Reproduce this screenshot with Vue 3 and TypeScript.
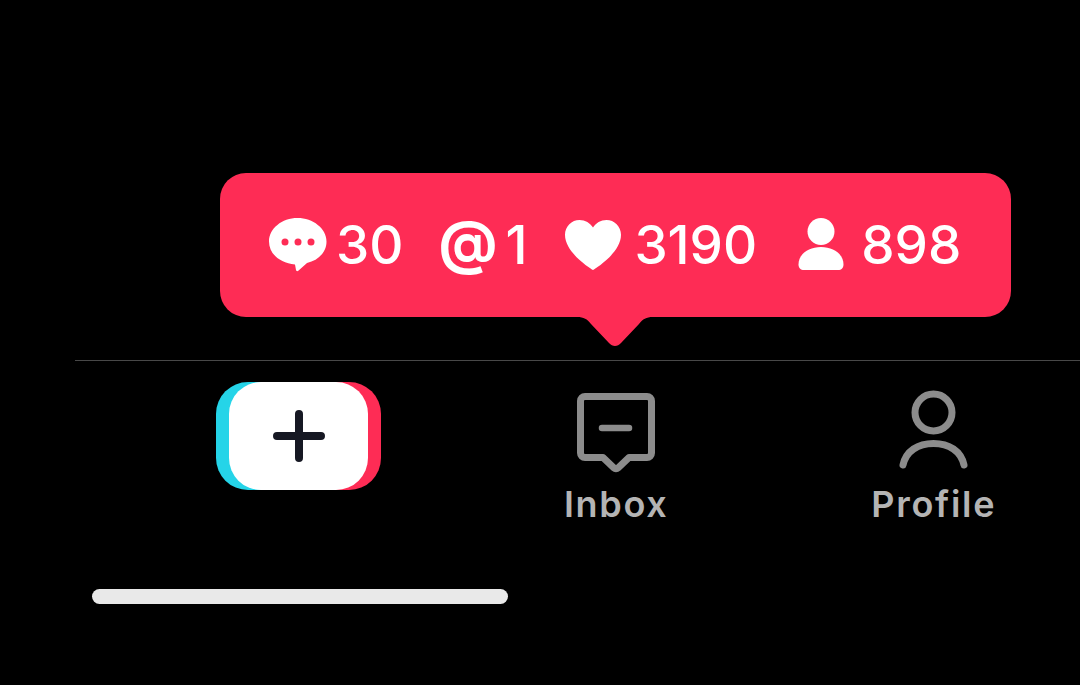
<template>
  <div class="screen">
    <div class="tooltip">
      <div class="stat stat-comment">
        <svg class="icon" width="58" height="54" viewBox="0 0 58 54">
          <path d="M28.500 0C13 0 0 10.500 0 23.500c0 12.500 11 21.500 26 23l1 5.500c.2 1.200 1.400 1.500 2.300.7L38 45C49 42.500 57.500 34.500 57.500 23.500 57.500 10.500 44 0 28.500 0z" fill="#fff" />
          <circle cx="16" cy="24" r="3.500" fill="#fe2c55" />
          <circle cx="29" cy="24" r="3.500" fill="#fe2c55" />
          <circle cx="42" cy="24" r="3.500" fill="#fe2c55" />
        </svg>
        <span>30</span>
      </div>
      <div class="stat stat-mention">
        <span class="at">@</span>
        <span>1</span>
      </div>
      <div class="stat stat-like">
        <svg class="icon" width="56" height="52" viewBox="0 0 58 52">
          <path d="M29 52C26 50 0 34 0 15.500 0 6.500 7 0 15 0c6 0 11 3 14 8 3-5 8-8 14-8 8 0 15 6.500 15 15.500C58 34 32 50 29 52z" fill="#fff" />
        </svg>
        <span>3190</span>
      </div>
      <div class="stat stat-follow">
        <svg class="icon" width="46" height="54" viewBox="0 0 46 54">
          <circle cx="23" cy="13.500" r="13.500" fill="#fff" />
          <path d="M23 29C10 29 .5 36.500 .5 46.500.5 50 2.500 52 6 52h34c3.500 0 5.500-2 5.500-5.500C45.500 36.500 36 29 23 29z" fill="#fff" />
        </svg>
        <span>898</span>
      </div>
      <svg class="tail" width="76" height="30" viewBox="0 0 76 30">
        <path d="M0 0h76c-7 0-10 2-14 7L44 26c-3.500 4-8.500 4-12 0L14 7C10 2 7 0 0 0z" fill="#fe2c55" />
      </svg>
    </div>

    <div class="tabbar">
      <div class="tab">
        <div class="create">
          <span class="create-cyan"></span>
          <span class="create-pink"></span>
          <span class="create-white">
            <svg width="52" height="52" viewBox="0 0 52 52">
              <path d="M26 4v44M4 26h44" stroke="#161823" stroke-width="8" stroke-linecap="round" />
            </svg>
          </span>
        </div>
      </div>
      <div class="tab">
        <svg class="tab-icon" width="78" height="80" viewBox="0 0 78 80">
          <path d="M8 3.500h62a4.500 4.500 0 0 1 4.500 4.500v52a4.500 4.500 0 0 1-4.500 4.500H52L41 75a3 3 0 0 1-4 0L26 64.500H8A4.500 4.500 0 0 1 3.500 60V8A4.500 4.500 0 0 1 8 3.500z" fill="none" stroke="#8c8c8c" stroke-width="7" stroke-linejoin="round" />
          <path d="M25 35h27" stroke="#8c8c8c" stroke-width="6.500" stroke-linecap="round" />
        </svg>
        <span class="tab-label">Inbox</span>
      </div>
      <div class="tab">
        <svg class="tab-icon" width="78" height="80" viewBox="0 0 78 80">
          <circle cx="38.500" cy="19.500" r="18.500" fill="none" stroke="#8c8c8c" stroke-width="7" />
          <path d="M8 72C11 58 23 50.500 38.500 50.500S66 58 69 72" fill="none" stroke="#8c8c8c" stroke-width="7" stroke-linecap="round" />
        </svg>
        <span class="tab-label">Profile</span>
      </div>
    </div>

    <div class="home-bar"></div>
  </div>
</template>

<script setup lang="ts">
</script>

<style>
html,
body {
  background: #000;
  overflow: hidden;
}
</style>

<style scoped>
.screen {
  height: 685px;
  padding-top: 173px;
  box-sizing: border-box;
  background: #000;
  overflow: hidden;
  font-family: Inter, "Liberation Sans", sans-serif;
}
.tooltip {
  position: relative;
  display: flex;
  align-items: center;
  box-sizing: border-box;
  width: 791px;
  height: 144px;
  margin-left: 220px;
  padding-left: 49px;
  background: #fe2c55;
  border-radius: 26px;
  color: #fff;
  font-size: 53px;
  font-weight: 550;
  line-height: 1;
}
.stat {
  display: flex;
  align-items: center;
  gap: 9px;
}
.stat-mention {
  margin-left: 35px;
  gap: 8px;
}
.stat-like {
  margin-left: 38px;
  gap: 13px;
}
.stat-follow {
  margin-left: 41px;
  gap: 17px;
}
.at {
  padding-bottom: 6px;
  font-size: 58px;
  font-weight: 700;
}
.tail {
  position: absolute;
  left: 357px;
  top: 144px;
}
.tabbar {
  display: grid;
  grid-template-columns: repeat(3, 317.5px);
  height: 207px;
  margin: 43px 0 0 75px;
  padding: 21px 0 0 65px;
  border-top: 1px solid #484848;
  box-sizing: content-box;
}
.tab {
  display: flex;
  flex-direction: column;
  align-items: center;
}
.create {
  position: relative;
  width: 165px;
  height: 108px;
}
.create-cyan,
.create-pink,
.create-white {
  position: absolute;
  top: 0;
  bottom: 0;
  border-radius: 32px;
}
.create-cyan {
  left: 0;
  width: 124px;
  background: #25d4e8;
}
.create-pink {
  right: 0;
  width: 124px;
  background: #fe2c55;
}
.create-white {
  left: 13px;
  right: 13px;
  display: flex;
  align-items: center;
  justify-content: center;
  background: #fff;
}
.tab-icon {
  margin-top: 11px;
  overflow: visible;
}
.tab-label {
  margin-top: 10px;
  font-size: 36px;
  font-weight: 600;
  letter-spacing: 1.700px;
  line-height: 42px;
  color: #b4b4b4;
}
.home-bar {
  width: 416px;
  height: 15px;
  margin-left: 92px;
  border-radius: 8px;
  background: #e9e9e9;
}
</style>
